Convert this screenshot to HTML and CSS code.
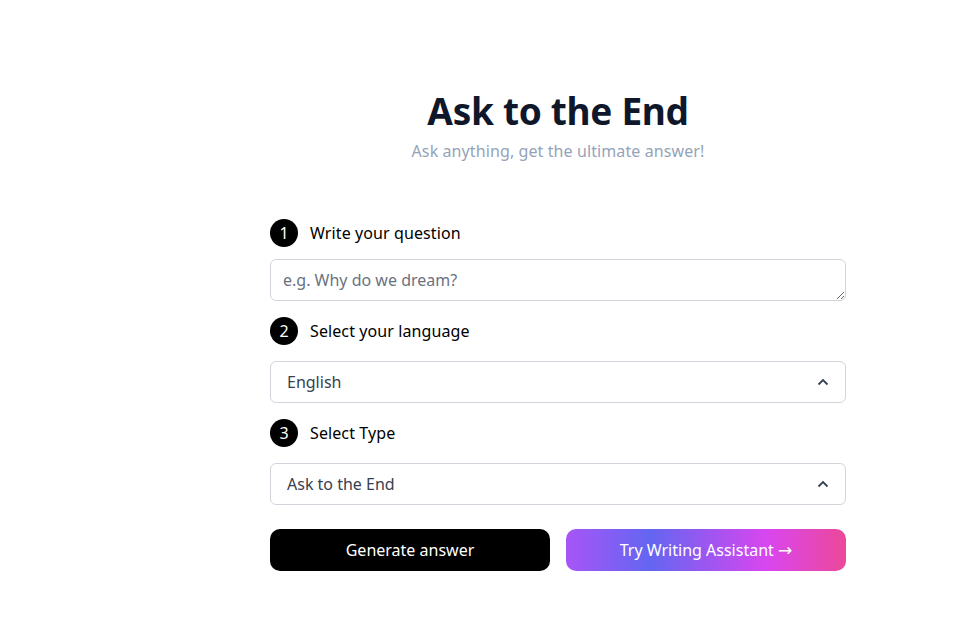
FILE: index.html
```html
<!DOCTYPE html>
<html lang="en">
<head>
    <meta charset="UTF-8">
    <meta name="viewport" content="width=device-width, initial-scale=1.0">
    <title>Ask to the End</title>
    <link rel="stylesheet" href="styles.css">
</head>
<body>
    <main class="page">
        <header class="hero">
            <h1>Ask to the End</h1>
            <p>Ask anything, get the ultimate answer!</p>
        </header>
        <form class="ask-form">
            <div class="step">
                <span class="step-num">1</span>
                <label for="question">Write your question</label>
            </div>
            <textarea id="question" rows="1" placeholder="e.g. Why do we dream?"></textarea>

            <div class="step">
                <span class="step-num">2</span>
                <label>Select your language</label>
            </div>
            <div class="select">
                <span>English</span>
                <svg width="12" height="8" viewBox="0 0 12 8"><path d="M1.5 6.5 L6 2 L10.5 6.5" fill="none" stroke="#374151" stroke-width="1.8"/></svg>
            </div>

            <div class="step">
                <span class="step-num">3</span>
                <label>Select Type</label>
            </div>
            <div class="select">
                <span>Ask to the End</span>
                <svg width="12" height="8" viewBox="0 0 12 8"><path d="M1.5 6.5 L6 2 L10.5 6.5" fill="none" stroke="#374151" stroke-width="1.8"/></svg>
            </div>

            <div class="buttons">
                <button type="button" class="btn-dark">Generate answer</button>
                <button type="button" class="btn-gradient">Try Writing Assistant <span class="arrow">&rarr;</span></button>
            </div>
        </form>
    </main>
</body>
</html>
```

FILE: styles.css
```css
body {
    margin: 0;
    font-family: "Noto Sans", "Open Sans", sans-serif;
    background: #fff;
    color: #000;
}
.page {
    width: 576px;
    margin-left: 270px;
    padding-top: 86px;
}
.hero {
    text-align: center;
    margin-bottom: 57px;
}
.hero h1 {
    margin: 0 0 4px;
    font-size: 37px;
    line-height: 50px;
    font-weight: 700;
    color: #0f172a;
    letter-spacing: -0.3px;
}
.hero p {
    margin: 0;
    font-size: 16px;
    line-height: 22px;
    color: #94a3b8;
    letter-spacing: 0.1px;
}
.ask-form {
    display: flex;
    flex-direction: column;
}
.step {
    display: flex;
    align-items: center;
    gap: 12px;
    height: 28px;
    margin-bottom: 16px;
}
.step-num {
    width: 28px;
    height: 28px;
    border-radius: 50%;
    background: #000;
    color: #fff;
    font-size: 16px;
    display: flex;
    align-items: center;
    justify-content: center;
}
.step label {
    font-size: 16px;
    letter-spacing: 0.1px;
}
textarea {
    box-sizing: border-box;
    height: 42px;
    padding: 9px 12px;
    border: 1px solid #d1d5db;
    border-radius: 6px;
    font: inherit;
    font-size: 16px;
    line-height: 22px;
    margin: -4px 0 16px;
    resize: vertical;
}
textarea::placeholder {
    color: #6b7280;
}
.select {
    box-sizing: border-box;
    height: 42px;
    padding: 0 16px;
    border: 1px solid #d1d5db;
    border-radius: 6px;
    display: flex;
    align-items: center;
    justify-content: space-between;
    font-size: 16px;
    color: #374151;
    margin-bottom: 16px;
}
.buttons {
    display: flex;
    gap: 16px;
    margin-top: 8px;
}
.buttons button {
    flex: 1;
    height: 42px;
    border: none;
    border-radius: 10px;
    color: #fff;
    font: inherit;
    font-size: 16px;
    cursor: pointer;
}
.btn-dark {
    background: #000;
}
.btn-gradient {
    background: linear-gradient(90deg, #a855f7 0%, #6366f1 30%, #d946ef 72%, #ec4899 100%);
}
.arrow {
    font-family: "DejaVu Sans", sans-serif;
    font-size: 17px;
}
```
